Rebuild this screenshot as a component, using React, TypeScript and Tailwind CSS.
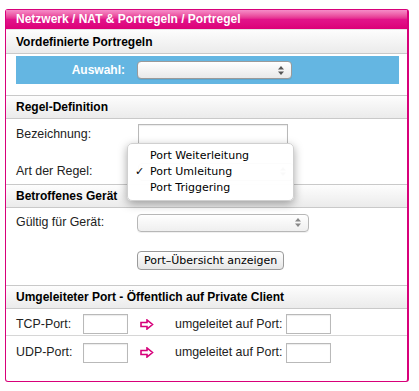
import React from 'react';

const SANS = { fontFamily: '"Liberation Sans", Arial, sans-serif' };
const UI = { fontFamily: '"DejaVu Sans", "Lucida Grande", sans-serif' };

// mac-style popup select, closed
const MacSelect: React.FC<{ w: string; disabled?: boolean }> = ({ w, disabled }) => (
  <div
    className={`${w} h-[18px] rounded-[4px] border border-[#9a9a9a] bg-gradient-to-b from-white to-[#e9e9e9] shadow-[0_1px_0_rgba(0,0,0,0.08)] flex items-center justify-end pr-[7px] ${disabled ? 'opacity-70' : ''}`}
  >
    <svg width="6" height="9" viewBox="0 0 6 9">
      <path d="M3 0 L6 3.5 H0 Z" fill="#555" />
      <path d="M3 9 L6 5.5 H0 Z" fill="#555" />
    </svg>
  </div>
);

const TextInput: React.FC<{ w: string }> = ({ w }) => (
  <div className={`${w} h-[20px] border border-[#b9b9b9] bg-white shadow-[inset_0_1px_1px_rgba(0,0,0,0.08)]`} />
);

const SectionHead: React.FC<{ title: string; top?: boolean }> = ({ title, top = true }) => (
  <div
    className={`${top ? 'h-[24px] border-t' : 'h-[24px]'} border-b border-[#c9c9c9] bg-gradient-to-b from-[#fdfdfd] to-[#ebebeb] flex items-center pl-[10px] text-[12px] font-bold text-black`}
  >
    {title}
  </div>
);

const Arrow = () => (
  <svg width="14" height="11" viewBox="0 0 14 11">
    <path d="M1 3.5 H7 V1 L12.5 5.5 L7 10 V7.5 H1 Z" fill="none" stroke="#d6007a" strokeWidth="1.6" strokeLinejoin="miter" />
  </svg>
);

export default function App() {
  return (
    <div className="min-h-[391px] bg-white pl-[5px] pt-[9px]" style={SANS}>
      <div className="relative w-[404px] h-[373px] border border-r-2 border-[#d8007a] rounded-[3px] bg-white">
        {/* title bar */}
        <div className="h-[19px] border-b border-[#e6e6e6] bg-gradient-to-b from-[#f58cc8] via-[#e2138a] to-[#dc0078] text-white font-bold text-[12px] leading-[18px] pl-[10px] box-content">
          Netzwerk / NAT &amp; Portregeln / Portregel
        </div>

        <SectionHead title="Vordefinierte Portregeln" top={false} />
        <div className="h-[41px] pt-[2px] flex flex-col">
          <div className="ml-[10px] mr-[8px] h-[28px] bg-[#64b6e2] flex items-center">
            <div className="w-[121px] pr-[12px] text-right text-white font-bold text-[12px]">Auswahl:</div>
            <MacSelect w="w-[155px]" />
          </div>
        </div>

        <SectionHead title="Regel-Definition" />
        <div className="h-[65px] flex flex-col text-[12.4px] text-[#222]">
          <div className="flex items-center h-[20px] mt-[5px]">
            <div className="w-[132px] pl-[10px]">Bezeichnung:</div>
            <TextInput w="w-[150px]" />
          </div>
          <div className="flex items-center h-[19px] mt-[18px]">
            <div className="w-[132px] pl-[10px]">Art der Regel:</div>
            <MacSelect w="w-[156px]" />
          </div>
        </div>

        <SectionHead title="Betroffenes Gerät" />
        <div className="h-[77px] flex flex-col text-[12.4px] text-[#222]">
          <div className="flex items-center h-[19px] mt-[5px]">
            <div className="w-[131px] pl-[10px]">Gültig für Gerät:</div>
            <MacSelect w="w-[172px]" disabled />
          </div>
          <div className="flex mt-[19px] pl-[131px]">
            <button
              className="h-[19px] px-[6px] rounded-[4px] border border-[#9a9a9a] bg-gradient-to-b from-white to-[#e6e6e6] text-[11px] text-black leading-none"
              style={UI}
            >
              Port–Übersicht anzeigen
            </button>
          </div>
        </div>

        <SectionHead title="Umgeleiteter Port - Öffentlich auf Private Client" />
        <div className="flex flex-col text-[12.4px] text-[#222]">
          <div className="flex items-center h-[27px] pt-[4px] border-b border-[#d6d6d6]">
            <div className="w-[77px] pl-[10px]">TCP-Port:</div>
            <TextInput w="w-[45px]" />
            <div className="w-[47px] pl-[12px] flex"><Arrow /></div>
            <div className="w-[111px]">umgeleitet auf Port:</div>
            <TextInput w="w-[45px]" />
          </div>
          <div className="flex items-center h-[27px] pt-[6px]">
            <div className="w-[77px] pl-[10px]">UDP-Port:</div>
            <TextInput w="w-[45px]" />
            <div className="w-[47px] pl-[12px] flex"><Arrow /></div>
            <div className="w-[111px]">umgeleitet auf Port:</div>
            <TextInput w="w-[45px]" />
          </div>
        </div>

        {/* open popup menu of "Art der Regel" */}
        <div
          className="absolute left-[121px] top-[133px] w-[167px] h-[58px] rounded-[5px] bg-white/[0.97] shadow-[0_3px_10px_rgba(0,0,0,0.35)] border border-[#d0d0d0] pt-[4px] text-[11px] text-black"
          style={UI}
        >
          {[
            ['', 'Port Weiterleitung'],
            ['✓', 'Port Umleitung'],
            ['', 'Port Triggering'],
          ].map(([mark, label]) => (
            <div key={label} className="flex items-center h-[16px]">
              <span className="w-[22px] pl-[7px] text-[11px]">{mark}</span>
              <span>{label}</span>
            </div>
          ))}
        </div>
      </div>
    </div>
  );
}
